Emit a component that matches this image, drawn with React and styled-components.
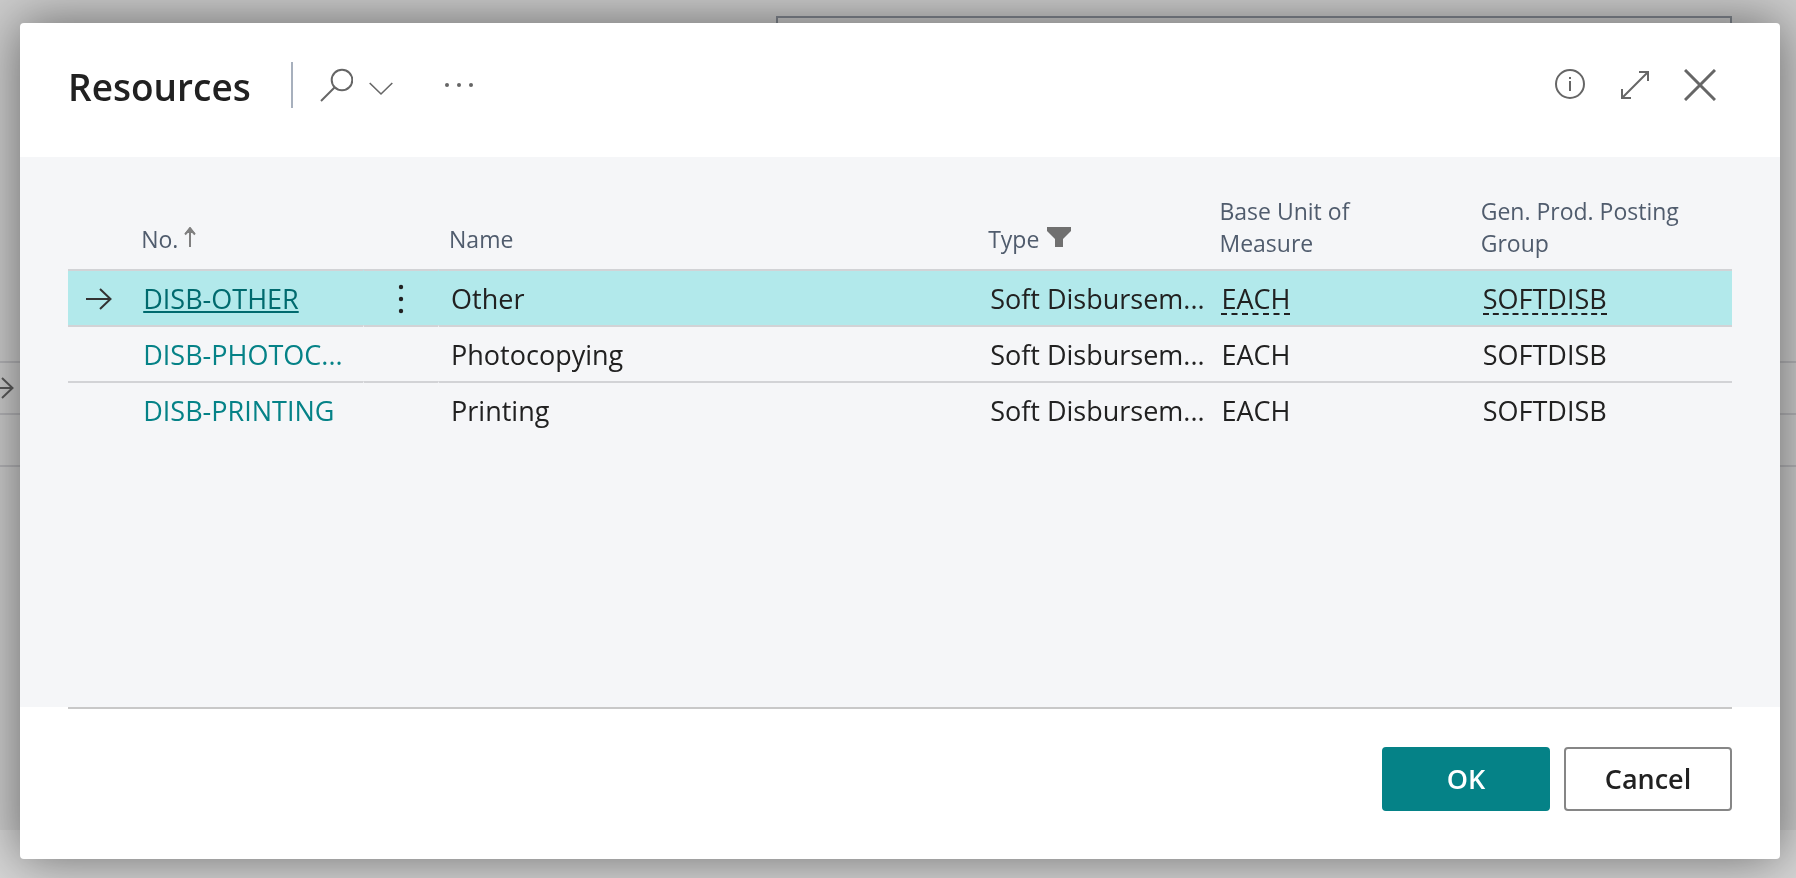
import React from 'react';
import styled, { createGlobalStyle } from 'styled-components';

const GlobalStyle = createGlobalStyle`
	:root {
		--teal: #058287;
		--teal-dark: #006a6e;
		--text: #212121;
		--label: #505c6d;
		--icon: #666666;
		--line: #d2d3d6;
	}
	* {
		box-sizing: border-box;
	}
	body {
		margin: 0;
		background: #d6d6d6;
		color: var(--text);
		font-family: 'Open Sans', 'Noto Sans', sans-serif;
	}
	button {
		font-family: inherit;
		color: inherit;
		cursor: pointer;
	}
`;

/* page behind the dialog */
const Page = styled.div`
	min-height: 100vh;
	padding-bottom: 48px;
	display: flex;
	flex-direction: column;
	overflow: hidden;
`;
const PageBody = styled.div`
	flex: 1;
	padding-top: 16px;
	background: #cccccc;
`;
const PageField = styled.div`
	width: calc(57% - 68px);
	height: 64px;
	margin: 0 64px 281px auto;
	border: 2px solid #828890;
`;
const PageRow = styled.div`
	height: 52px;
	border-top: 2px solid #b4b4b7;
	display: flex;
	align-items: center;
	svg {
		margin-left: -12px;
	}
`;

const Overlay = styled.div`
	position: fixed;
	inset: 0;
	padding: 23px 16px 19px 20px;
	display: flex;
`;
const Dialog = styled.section`
	flex: 1;
	display: flex;
	flex-direction: column;
	background: #ffffff;
	border-radius: 4px;
	box-shadow: 0 0 52px rgba(0, 0, 0, 0.5);
	overflow: hidden;
`;
const Header = styled.header`
	height: 134px;
	padding: 0 64px 10px 48px;
	display: flex;
	align-items: center;
`;
const Title = styled.h1`
	margin: 0;
	padding: 4px 40px 0 0;
	font-size: 37px;
	line-height: 54px;
	font-weight: 600;
`;
const Tools = styled.div`
	display: flex;
	align-items: center;
	gap: ${(props) => props.$gap};
	margin-left: ${(props) => (props.$end ? 'auto' : '0')};
	padding-left: ${(props) => (props.$end ? '0' : '26px')};
	${(props) => !props.$end && 'border-left: 2px solid #a7b0bd;'}
	height: 46px;
`;
const IconButton = styled.button`
	padding: 0;
	background: none;
	border: none;
	display: flex;
	color: ${(props) => props.$color || 'var(--icon)'};
	margin-left: ${(props) => (props.$apart ? '36px' : '0')};
`;

const Body = styled.div`
	flex: 1;
	padding: 34px 48px 0;
	background: #f5f6f8;
`;
const Table = styled.table`
	width: 100%;
	table-layout: fixed;
	border-collapse: separate;
	border-spacing: 0;
	text-align: left;
`;
const Col = styled.col`
	width: ${(props) => props.$width};
`;
const HeadCell = styled.th`
	height: 78px;
	padding: 0 0 10px ${(props) => (props.$first ? '0' : '10px')};
	vertical-align: bottom;
	color: var(--label);
	font-size: 23px;
	line-height: 32px;
	font-weight: 400;
	white-space: nowrap;
`;
const HeadLabel = styled.span`
	display: flex;
	align-items: center;
	gap: ${(props) => props.$gap || '0'};
	padding-bottom: 4px;
	svg {
		margin-bottom: 4px;
	}
`;
const Row = styled.tr`
	background: ${(props) => (props.$selected ? '#b2e9eb' : 'transparent')};
`;
const Cell = styled.td`
	height: 56px;
	padding: 2px 0 0 ${(props) => (props.$first ? '2px' : '12px')};
	border-top: 2px solid var(--line);
	border-right: ${(props) => (props.$notch ? '1px' : '0')} solid transparent;
	font-size: 27px;
	line-height: 36px;
	white-space: nowrap;
`;
const IconCell = styled(Cell)`
	padding: 2px ${(props) => (props.$notch ? '0' : '12px')} 0 0;
	svg,
	button {
		display: block;
		margin: 0 auto;
	}
`;
const RecordLink = styled.a`
	color: ${(props) => (props.$selected ? 'var(--teal-dark)' : 'var(--teal)')};
	text-decoration: ${(props) => (props.$selected ? 'underline' : 'none')};
	text-decoration-thickness: 2px;
	text-underline-offset: 2px;
	text-decoration-skip-ink: none;
`;
const Lookup = styled.span`
	display: inline-block;
	line-height: 28px;
	border-bottom: 2px dashed ${(props) => (props.$selected ? 'var(--text)' : 'transparent')};
`;

const Footer = styled.footer`
	margin: 0 48px;
	padding: 38px 0 48px;
	border-top: 2px solid #c8c8c8;
	display: flex;
	justify-content: flex-end;
	gap: 14px;
`;
const Button = styled.button`
	width: 168px;
	height: 64px;
	border: 2px solid ${(props) => (props.$primary ? 'var(--teal)' : '#868686')};
	border-radius: 4px;
	background: ${(props) => (props.$primary ? 'var(--teal)' : '#ffffff')};
	color: ${(props) => (props.$primary ? '#ffffff' : 'var(--text)')};
	font-size: 27px;
	line-height: 36px;
	font-weight: 600;
`;

const ArrowRight = ({ color = '#333333' }) => (
	<svg width="26" height="22" viewBox="0 0 26 22" fill="none" stroke={color} strokeWidth="2">
		<path d="M0 11h24.5M14 1l10.5 10L14 21" />
	</svg>
);

const resources = [
	{ no: 'DISB-OTHER', name: 'Other' },
	{ no: 'DISB-PHOTOC...', name: 'Photocopying' },
	{ no: 'DISB-PRINTING', name: 'Printing' },
];

function ResourceRow({ no, name, selected }) {
	return (
		<Row $selected={selected}>
			<IconCell>{selected && <ArrowRight />}</IconCell>
			<Cell $first $notch>
				<RecordLink href="#" $selected={selected}>
					{no}
				</RecordLink>
			</Cell>
			<IconCell $notch>
				{selected && (
					<IconButton $color="var(--text)" aria-label="Show more options">
						<svg width="6" height="30" viewBox="0 0 6 30" fill="currentColor">
							<circle cx="3" cy="3" r="2.2" />
							<circle cx="3" cy="15" r="2.2" />
							<circle cx="3" cy="27" r="2.2" />
						</svg>
					</IconButton>
				)}
			</IconCell>
			<Cell>{name}</Cell>
			<Cell>Soft Disbursem...</Cell>
			<Cell>
				<Lookup $selected={selected}>EACH</Lookup>
			</Cell>
			<Cell>
				<Lookup $selected={selected}>SOFTDISB</Lookup>
			</Cell>
		</Row>
	);
}

export default function App() {
	return (
		<>
			<GlobalStyle />
			<Page aria-hidden="true">
				<PageBody>
					<PageField />
					<PageRow>
						<ArrowRight color="#5a5a5a" />
					</PageRow>
					<PageRow />
					<PageRow />
				</PageBody>
			</Page>
			<Overlay>
				<Dialog role="dialog" aria-labelledby="dialog-title">
					<Header>
						<Title id="dialog-title">Resources</Title>
						<Tools $gap="16px">
							<IconButton aria-label="Search">
								<svg width="34" height="34" viewBox="0 0 34 34" fill="none" stroke="currentColor" strokeWidth="2">
									<circle cx="23" cy="12" r="10.3" />
									<path d="M15.5 19.5L2 33" />
								</svg>
							</IconButton>
							<IconButton aria-label="Search options">
								<svg width="24" height="26" viewBox="0 0 24 26" fill="none" stroke="currentColor" strokeWidth="1.6">
									<path d="M.7 11l11.3 11L23.3 11" />
								</svg>
							</IconButton>
							<IconButton $apart aria-label="More actions">
								<svg width="28" height="6" viewBox="0 0 28 6" fill="currentColor">
									<circle cx="2" cy="3" r="2" />
									<circle cx="14" cy="3" r="2" />
									<circle cx="26" cy="3" r="2" />
								</svg>
							</IconButton>
						</Tools>
						<Tools $gap="34px" $end>
							<IconButton aria-label="Show details">
								<svg width="32" height="32" viewBox="0 0 32 32" fill="none" stroke="currentColor" strokeWidth="2">
									<circle cx="16" cy="15" r="14" />
									<path d="M16 12v10M16 8v2" />
								</svg>
							</IconButton>
							<IconButton aria-label="Expand">
								<svg width="30" height="30" viewBox="0 0 30 30" fill="none" stroke="currentColor" strokeWidth="2">
									<path d="M19 2h9v9M28 2L2 28M2 19v9h9" />
								</svg>
							</IconButton>
							<IconButton aria-label="Close">
								<svg width="32" height="32" viewBox="0 0 32 32" fill="none" stroke="currentColor" strokeWidth="3">
									<path d="M1 1l30 30M31 1L1 31" />
								</svg>
							</IconButton>
						</Tools>
					</Header>
					<Body>
						<Table>
							<colgroup>
								<Col $width="4.4%" />
								<Col $width="13.4%" />
								<Col $width="4.5%" />
								<Col $width="32.4%" />
								<Col $width="13.9%" />
								<Col $width="15.7%" />
								<Col />
							</colgroup>
							<thead>
								<tr>
									<HeadCell aria-label="Selection" />
									<HeadCell $first>
										<HeadLabel $gap="6px">
											No.
											<svg width="12" height="20" viewBox="0 0 12 20" fill="none" stroke="#808080" strokeWidth="2">
												<path d="M6 20V2M1 7.500L6 2l5 5.500" />
												<path d="M3 5L6 1l3 4z" fill="#808080" />
											</svg>
										</HeadLabel>
									</HeadCell>
									<HeadCell aria-label="Options" />
									<HeadCell>
										<HeadLabel>Name</HeadLabel>
									</HeadCell>
									<HeadCell>
										<HeadLabel $gap="8px">
											Type
											<svg width="24" height="20" viewBox="0 0 24 20" fill="#707070">
												<path d="M0 0h24v4l-8 8v8H8v-8L0 4z" />
											</svg>
										</HeadLabel>
									</HeadCell>
									<HeadCell>
										Base Unit of
										<br />
										Measure
									</HeadCell>
									<HeadCell>
										Gen. Prod. Posting
										<br />
										Group
									</HeadCell>
								</tr>
							</thead>
							<tbody>
								{resources.map((item, i) => (
									<ResourceRow key={item.no} {...item} selected={i === 0} />
								))}
							</tbody>
						</Table>
					</Body>
					<Footer>
						<Button $primary>OK</Button>
						<Button>Cancel</Button>
					</Footer>
				</Dialog>
			</Overlay>
		</>
	);
}
